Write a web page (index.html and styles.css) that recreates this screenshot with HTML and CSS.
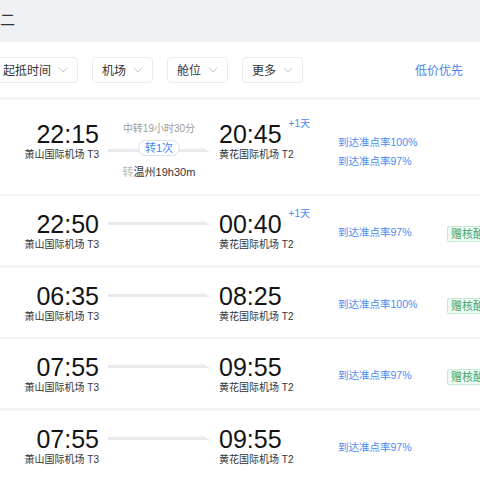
FILE: index.html
```html
<!DOCTYPE html>
<html lang="zh-CN">
<head>
<meta charset="utf-8">
<title>航班列表</title>
<link rel="stylesheet" href="styles.css">
</head>
<body>
<div class="topbar"><span class="day">周二</span></div>

<div class="filters">
  <div class="chips">
    <div class="chip">起抵时间<svg class="chev" viewBox="0 0 10 6"><polyline points="1,0.8 5,5 9,0.8"/></svg></div>
    <div class="chip">机场<svg class="chev" viewBox="0 0 10 6"><polyline points="1,0.8 5,5 9,0.8"/></svg></div>
    <div class="chip">舱位<svg class="chev" viewBox="0 0 10 6"><polyline points="1,0.8 5,5 9,0.8"/></svg></div>
    <div class="chip">更多<svg class="chev" viewBox="0 0 10 6"><polyline points="1,0.8 5,5 9,0.8"/></svg></div>
  </div>
  <div class="sort">低价优先</div>
</div>

<div class="list">
  <div class="flight first">
    <div class="dep"><div class="time">22:15</div><div class="apt">萧山国际机场 T3</div></div>
    <div class="mid transfer">
      <div class="mid-top">中转19小时30分</div>
      <div class="track">
        <svg class="line" viewBox="0 0 102 6"><polygon points="0,3 94,3 92,0 102,6 0,6"/></svg>
        <span class="pill">转1次</span>
      </div>
      <div class="mid-bottom"><span class="muted">转</span>温州19h30m</div>
    </div>
    <div class="arr"><div class="time-wrap"><span class="time">20:45</span><span class="plus">+1天</span></div><div class="apt">黄花国际机场 T2</div></div>
    <div class="info"><div>到达准点率100%</div><div>到达准点率97%</div></div>
    <div class="tags"></div>
  </div>

  <div class="flight">
    <div class="dep"><div class="time">22:50</div><div class="apt">萧山国际机场 T3</div></div>
    <div class="mid"><svg class="line" viewBox="0 0 102 6"><polygon points="0,3 94,3 92,0 102,6 0,6"/></svg></div>
    <div class="arr"><div class="time-wrap"><span class="time">00:40</span><span class="plus">+1天</span></div><div class="apt">黄花国际机场 T2</div></div>
    <div class="info"><div>到达准点率97%</div></div>
    <div class="tags"><span class="badge">赠核酸检测</span></div>
  </div>

  <div class="flight">
    <div class="dep"><div class="time">06:35</div><div class="apt">萧山国际机场 T3</div></div>
    <div class="mid"><svg class="line" viewBox="0 0 102 6"><polygon points="0,3 94,3 92,0 102,6 0,6"/></svg></div>
    <div class="arr"><div class="time-wrap"><span class="time">08:25</span></div><div class="apt">黄花国际机场 T2</div></div>
    <div class="info"><div>到达准点率100%</div></div>
    <div class="tags"><span class="badge">赠核酸检测</span></div>
  </div>

  <div class="flight">
    <div class="dep"><div class="time">07:55</div><div class="apt">萧山国际机场 T3</div></div>
    <div class="mid"><svg class="line" viewBox="0 0 102 6"><polygon points="0,3 94,3 92,0 102,6 0,6"/></svg></div>
    <div class="arr"><div class="time-wrap"><span class="time">09:55</span></div><div class="apt">黄花国际机场 T2</div></div>
    <div class="info"><div>到达准点率97%</div></div>
    <div class="tags"><span class="badge">赠核酸检测</span></div>
  </div>

  <div class="flight">
    <div class="dep"><div class="time">07:55</div><div class="apt">萧山国际机场 T3</div></div>
    <div class="mid"><svg class="line" viewBox="0 0 102 6"><polygon points="0,3 94,3 92,0 102,6 0,6"/></svg></div>
    <div class="arr"><div class="time-wrap"><span class="time">09:55</span></div><div class="apt">黄花国际机场 T2</div></div>
    <div class="info"><div>到达准点率97%</div></div>
    <div class="tags"></div>
  </div>
</div>
</body>
</html>
```

FILE: styles.css
```css
* { box-sizing: border-box; }

html, body {
  margin: 0;
  padding: 0;
  width: 480px;
  height: 480px;
  overflow: hidden;
  background: #f3f4f6;
  font-family: "Liberation Sans", "Noto Sans CJK SC", sans-serif;
  color: #333;
}

.topbar {
  height: 42px;
  background: #eff0f4;
  display: flex;
  align-items: center;
  padding-bottom: 2px;
}

.day {
  font-size: 15px;
  line-height: 18px;
  color: #333;
  margin-left: -15px;
}

.filters {
  height: 55px;
  background: #fff;
  display: flex;
  align-items: center;
  justify-content: space-between;
  padding-right: 17px;
}

.chips {
  display: flex;
  gap: 14px;
  margin-left: -7px;
}

.chip {
  height: 26px;
  border: 1px solid #ebebed;
  border-radius: 4px;
  padding: 0 9px;
  display: flex;
  align-items: center;
  gap: 7px;
  font-size: 12px;
  color: #333;
  background: #fff;
}

.chev {
  width: 10px;
  height: 6px;
}

.chev polyline {
  fill: none;
  stroke: #c6c6c8;
  stroke-width: 1;
}

.sort {
  font-size: 12px;
  color: #4a86ec;
}

.list {
  display: flex;
  flex-direction: column;
  gap: 2.5px;
  padding-top: 3px;
}

.flight {
  background: #fff;
  height: 69px;
  padding-top: 14px;
  display: grid;
  grid-template-columns: 99px 102px 110px 100px minmax(0, 1fr);
  column-gap: 9px;
  align-items: start;
}

.flight.first {
  height: 93.5px;
  padding-top: 20px;
}

.time {
  font-size: 25px;
  line-height: 28px;
  color: #141414;
}

.apt {
  font-size: 10px;
  line-height: 14px;
  color: #333;
  white-space: nowrap;
}

.dep {
  text-align: right;
}

.time-wrap {
  display: flex;
  align-items: flex-start;
}

.plus {
  font-size: 10px;
  line-height: 12px;
  color: #4a8cf0;
  margin-left: 7px;
  margin-top: -2px;
}

.mid .line {
  display: block;
  width: 102px;
  height: 6px;
  margin-top: 9px;
}

.line polygon {
  fill: #e9e9eb;
}

.mid.transfer {
  display: flex;
  flex-direction: column;
  align-items: center;
  margin-top: 2px;
}

.mid-top {
  font-size: 10px;
  line-height: 14px;
  color: #9c9c9c;
}

.track {
  display: grid;
  place-items: center;
  width: 102px;
  margin-top: 4px;
}

.track > * {
  grid-area: 1 / 1;
}

.mid.transfer .line {
  margin-top: 1px;
}

.pill {
  font-size: 11px;
  line-height: 14px;
  color: #3d85f0;
  background: #fff;
  border: 1px solid #d7e2f4;
  border-radius: 8px;
  padding: 0 6px;
}

.mid-bottom {
  font-size: 11px;
  line-height: 16px;
  margin-top: 8px;
  color: #333;
}

.muted {
  color: #b8b8b8;
}

.info {
  margin-top: 14px;
  display: flex;
  flex-direction: column;
  gap: 3px;
  font-size: 10.5px;
  line-height: 16px;
  color: #4a8cf0;
  white-space: nowrap;
}

.tags {
  margin-top: 14px;
  white-space: nowrap;
  overflow: visible;
}

.badge {
  display: inline-block;
  font-size: 11px;
  line-height: 14px;
  color: #3aa66a;
  background: #effaf3;
  border: 1px solid #c5ead3;
  border-radius: 2px;
  padding: 0 3px;
}
```
